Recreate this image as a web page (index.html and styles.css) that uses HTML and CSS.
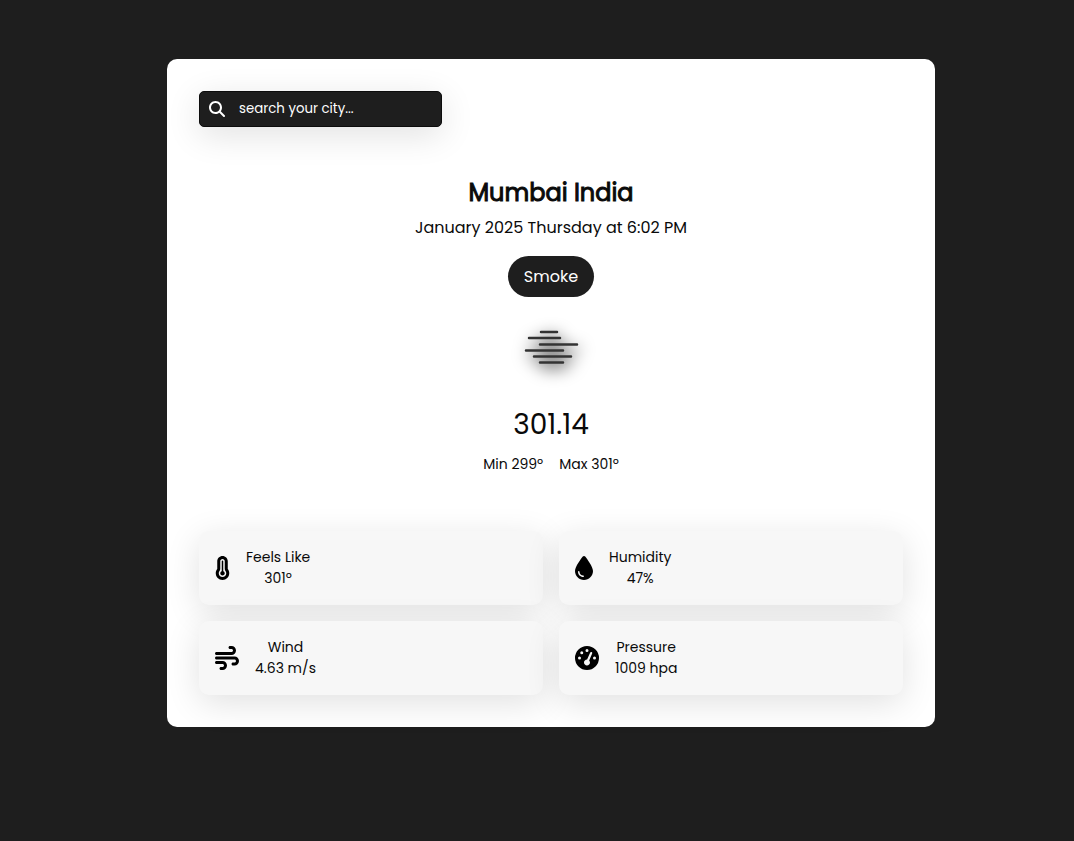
FILE: index.html
```html
<!DOCTYPE html>
<html lang="en">
<head>
<meta charset="utf-8">
<meta name="viewport" content="width=device-width, initial-scale=1">
<title>Weather</title>
<link rel="stylesheet" href="styles.css">
</head>
<body>
<main class="weather">
  <form class="search" role="search">
    <label class="search-label" for="city" aria-label="Search">
      <svg class="search-icon" viewBox="0 0 512 512" aria-hidden="true"><path d="M416 208c0 45.9-14.9 88.3-40 122.7L502.6 457.4c12.5 12.5 12.5 32.8 0 45.3s-32.8 12.5-45.3 0L330.7 376c-34.4 25.2-76.8 40-122.7 40C93.1 416 0 322.9 0 208S93.1 0 208 0S416 93.1 416 208zM208 352a144 144 0 1 0 0-288 144 144 0 1 0 0 288z"/></svg>
    </label>
    <input class="search-input" id="city" type="text" placeholder="search your city...">
  </form>

  <section class="current">
    <h1 class="place">Mumbai India</h1>
    <p class="date">January 2025 Thursday at 6:02 PM</p>
    <p class="condition">Smoke</p>
    <svg class="condition-icon" viewBox="0 0 100 100" aria-hidden="true">
      <path d="M40 35h16M28 41h31M39 47.500h37M25 53.500h37M33 59.500h37M39 65.500h23"/>
    </svg>
    <p class="temperature">301.14</p>
    <div class="range"><p>Min 299º</p><p>Max 301º</p></div>
  </section>

  <section class="details">
    <article class="card">
      <svg class="card-icon" viewBox="0 0 320 512" aria-hidden="true"><path d="M160 64c-26.500 0-48 21.500-48 48V276.500c0 17.300-7.100 31.900-15.300 42.500C86.200 332.600 80 349.500 80 368c0 44.200 35.800 80 80 80s80-35.800 80-80c0-18.500-6.200-35.400-16.700-48.900c-8.200-10.600-15.300-25.200-15.300-42.500V112c0-26.500-21.500-48-48-48zM48 112C48 50.200 98.100 0 160 0s112 50.100 112 112V276.500c0 .1 .1 .3 .2 .6c.2 .6 .8 1.600 1.700 2.800c18.900 24.400 30.100 55 30.100 88.100c0 79.500-64.500 144-144 144S16 447.500 16 368c0-33.200 11.200-63.800 30.100-88.100c.9-1.200 1.500-2.200 1.700-2.800c.1-.3 .2-.5 .2-.6V112zM208 368c0 26.500-21.500 48-48 48s-48-21.500-48-48c0-20.900 13.400-38.700 32-45.300V112c0-8.800 7.200-16 16-16s16 7.200 16 16V322.700c18.600 6.600 32 24.400 32 45.300z"/></svg>
      <div class="card-text"><h2>Feels Like</h2><p>301º</p></div>
    </article>
    <article class="card">
      <svg class="card-icon" viewBox="0 0 384 512" aria-hidden="true"><path d="M192 512C86 512 0 426 0 320C0 228.800 130.200 57.700 166.600 11.700C172.600 4.200 181.500 0 191.100 0h1.800c9.600 0 18.500 4.200 24.500 11.700C253.800 57.700 384 228.800 384 320c0 106-86 192-192 192zM96 336c0-8.800-7.200-16-16-16s-16 7.200-16 16c0 61.900 50.100 112 112 112c8.800 0 16-7.200 16-16s-7.200-16-16-16c-44.200 0-80-35.800-80-80z"/></svg>
      <div class="card-text"><h2>Humidity</h2><p>47%</p></div>
    </article>
    <article class="card">
      <svg class="card-icon" viewBox="0 0 512 512" aria-hidden="true"><path d="M288 32c0 17.700 14.300 32 32 32h32c17.700 0 32 14.300 32 32s-14.300 32-32 32H32c-17.700 0-32 14.300-32 32s14.300 32 32 32H352c53 0 96-43 96-96s-43-96-96-96H320c-17.700 0-32 14.300-32 32zm64 352c0 17.700 14.300 32 32 32h32c53 0 96-43 96-96s-43-96-96-96H32c-17.700 0-32 14.300-32 32s14.300 32 32 32H416c17.700 0 32 14.300 32 32s-14.300 32-32 32H384c-17.700 0-32 14.300-32 32zM128 512h32c53 0 96-43 96-96s-43-96-96-96H32c-17.700 0-32 14.300-32 32s14.300 32 32 32H160c17.700 0 32 14.300 32 32s-14.300 32-32 32H128c-17.700 0-32 14.300-32 32s14.300 32 32 32z"/></svg>
      <div class="card-text"><h2>Wind</h2><p>4.63 m/s</p></div>
    </article>
    <article class="card">
      <svg class="card-icon" viewBox="0 0 512 512" aria-hidden="true"><path d="M0 256a256 256 0 1 1 512 0A256 256 0 1 1 0 256zM288 96a32 32 0 1 0 -64 0 32 32 0 1 0 64 0zM256 416c35.300 0 64-28.700 64-64c0-17.400-6.900-33.100-18.100-44.600L366 161.700c5.300-12.100-.2-26.300-12.300-31.600s-26.300 .2-31.600 12.300L257.900 288c-.6 0-1.300 0-1.900 0c-35.300 0-64 28.700-64 64s28.700 64 64 64zM176 144a32 32 0 1 0 -64 0 32 32 0 1 0 64 0zM96 288a32 32 0 1 0 0-64 32 32 0 1 0 0 64zm352-32a32 32 0 1 0 -64 0 32 32 0 1 0 64 0z"/></svg>
      <div class="card-text"><h2>Pressure</h2><p>1009 hpa</p></div>
    </article>
  </section>
</main>
</body>
</html>
```
FILE: styles.css
```css
* {
  box-sizing: border-box;
  margin: 0;
  padding: 0;
}

body {
  background: #1e1e1e;
  color: #0a0a0a;
  font-family: Poppins, Inter, "Open Sans", sans-serif;
  font-size: 14px;
  line-height: 21px;
  padding: 59px 16px 59px 44px;
}

.weather {
  max-width: 768px;
  margin: 0 auto;
  padding: 32px;
  background: #fff;
  border-radius: 10px;
}

.search {
  display: flex;
  align-items: center;
  gap: 14px;
  width: 243px;
  max-width: 100%;
  height: 36px;
  padding: 0 9px 1px;
  background: #1e1e1e;
  border: 1px solid #0c0c0c;
  border-radius: 5px;
  box-shadow: 0 8px 34px rgba(0, 0, 0, 0.12);
}

.search-label {
  display: flex;
}

.search-icon {
  width: 16px;
  height: 16px;
  fill: #fff;
}

.search-input {
  flex: 1;
  min-width: 0;
  border: 0;
  outline: 0;
  background: transparent;
  color: #fff;
  font-family: inherit;
}

.search-input::placeholder {
  color: #fff;
  opacity: 1;
}

.current {
  display: flex;
  flex-direction: column;
  align-items: center;
  padding: 48px 0 56px;
}

.place {
  font-size: 24px;
  line-height: 36px;
  font-weight: 400;
  -webkit-text-stroke: 1px currentColor;
}

.date {
  margin-top: 5px;
  font-size: 16px;
  line-height: 24px;
}

.condition {
  margin-top: 16px;
  padding: 8px 16px;
  border-radius: 24px;
  background: #1e1e1e;
  color: #fff;
  font-size: 16px;
  line-height: 25px;
}

.condition-icon {
  width: 100px;
  height: 100px;
  fill: none;
  stroke: #333;
  stroke-width: 2.5;
  stroke-linecap: round;
  filter: drop-shadow(2px 5px 8px #000);
}

.temperature {
  margin-top: 6px;
  font-size: 28px;
  line-height: 44px;
}

.range {
  display: flex;
  gap: 16px;
  margin-top: 7px;
}

.details {
  display: grid;
  grid-template-columns: repeat(auto-fit, minmax(240px, 1fr));
  gap: 16px;
}

.card {
  display: flex;
  align-items: center;
  gap: 16px;
  padding: 16px;
  background: #f7f7f7;
  border-radius: 10px;
  box-shadow: 0 8px 34px rgba(0, 0, 0, 0.12);
}

.card-icon {
  height: 24px;
  fill: #000;
}

.card-text {
  text-align: center;
}

.card-text h2 {
  font: inherit;
}
```
